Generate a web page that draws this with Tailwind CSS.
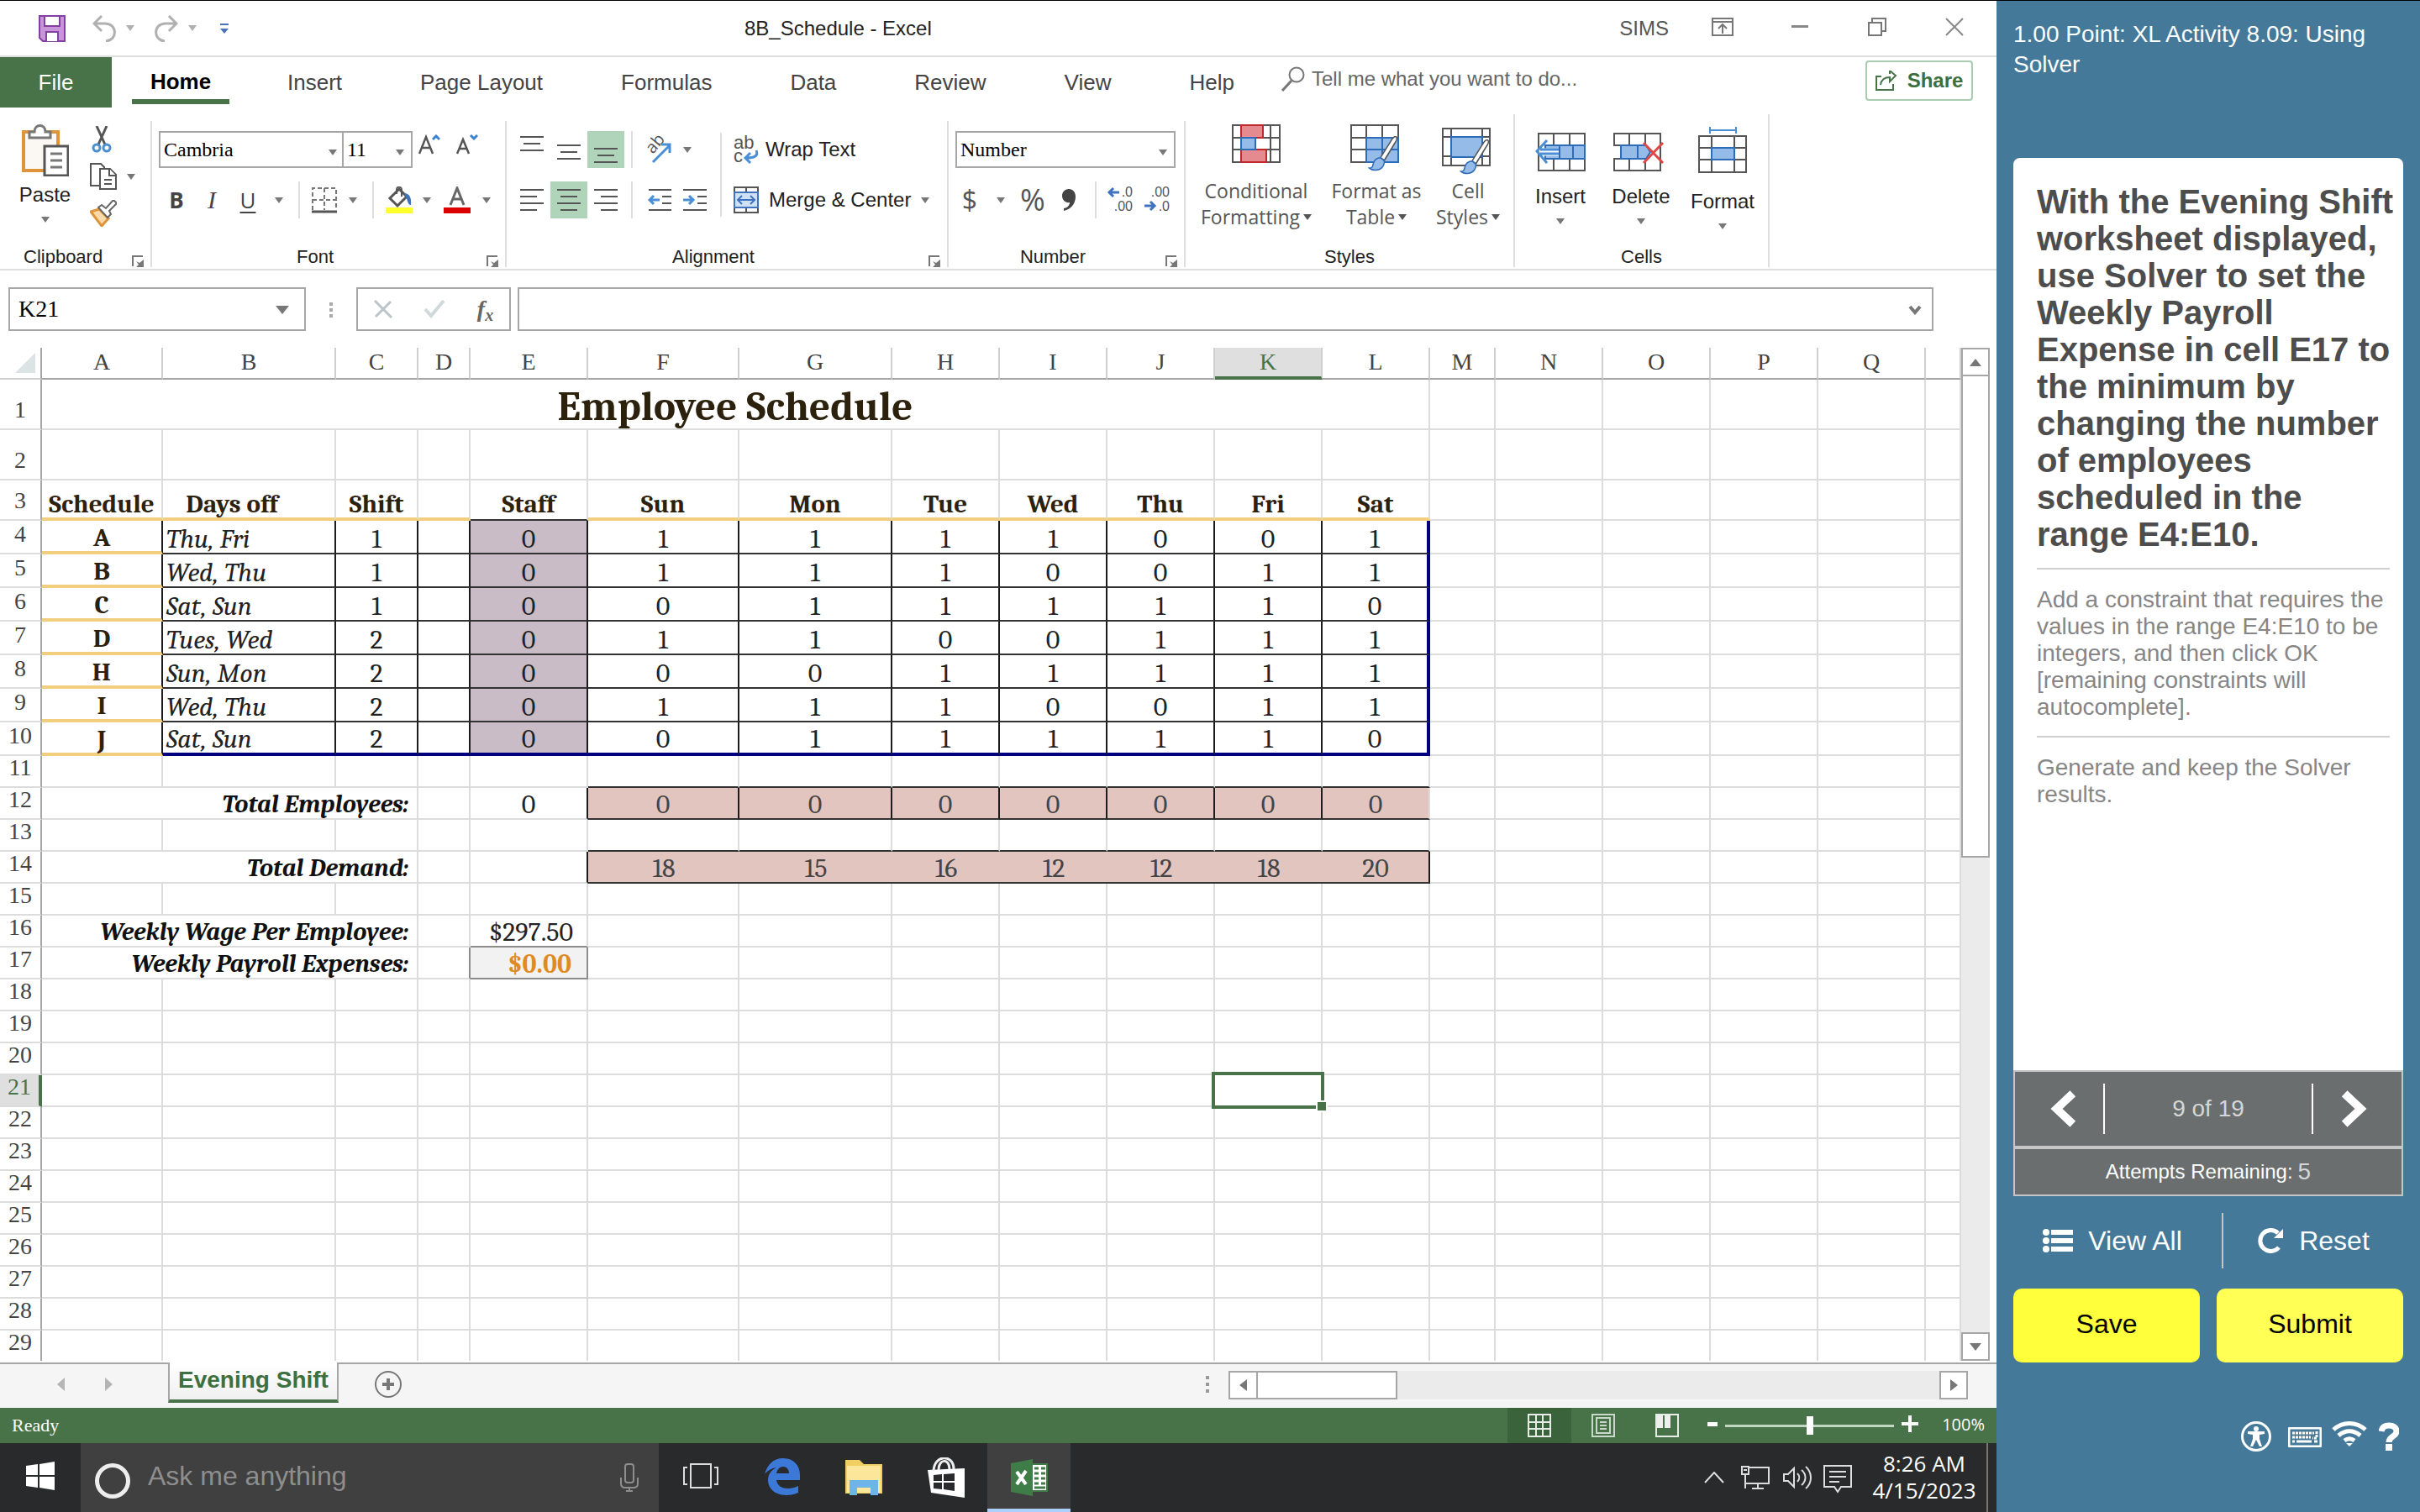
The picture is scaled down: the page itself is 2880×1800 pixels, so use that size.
<!DOCTYPE html>
<html lang="en">
  <head>
    <meta charset="UTF-8" />
    <meta name="viewport" content="width=device-width, initial-scale=1.0" />
    <title>8B_Schedule - Excel</title>
    <script src="https://cdn.jsdelivr.net/npm/@tailwindcss/browser@4"></script>
  </head>
  <body
    class="h-screen flex overflow-hidden bg-white border-t border-black font-['Liberation_Sans',Arial,sans-serif] text-[#222]"
  >
    <svg class="hidden">
      <symbol id="dd" viewBox="0 0 10 7"><path d="M0 0h10L5 7z" fill="currentColor" /></symbol>
      <symbol id="launcher" viewBox="0 0 14 14">
        <path d="M1 13V1h12" fill="none" stroke="#777" stroke-width="2" />
        <path d="M14 5v9H5l3-3-3-4 4 2z" fill="#777" />
      </symbol>
      <symbol id="brush" viewBox="0 0 44 54">
        <path d="M42 1c2 2 1 5-1 8L24 37l-6-4L35 6c2-4 5-6 7-5z" fill="#fff" stroke="#555" stroke-width="2" />
        <path d="M18 33l6 5c0 9-6 14-13 14-4 0-8-1-10-3 5 0 5-3 6-7 1-5 6-9 11-9z" fill="#95bce9" stroke="#2f6cb8" stroke-width="2" />
      </symbol>
    </svg>

    <main class="flex-1 min-w-0 flex flex-col">
      <!-- Title bar -->
      <header class="h-[67px] shrink-0 flex items-center border-b-2 border-[#dedede] text-2xl">
        <div class="w-[886px] flex items-center pl-[46px]">
          <button aria-label="Save workbook">
            <svg class="w-8 h-8" viewBox="0 0 32 32">
              <path d="M1 1h30v30H5l-4-4z" fill="#c795d8" stroke="#8440a0" stroke-width="2" />
              <path d="M7 1h18v12H7zM9 31V20h14v11" fill="#fff" stroke="#8440a0" stroke-width="2" />
            </svg>
          </button>
          <button class="ml-8 flex items-center gap-3 text-[#b0b0b0]" aria-label="Undo">
            <svg class="w-7 h-8" viewBox="0 0 28 32" fill="none" stroke="currentColor" stroke-width="3">
              <path d="M11 1L2 10l9 9M2 10h13c15 0 15 20 1 21" />
            </svg>
            <svg class="w-[10px] h-[7px]"><use href="#dd" /></svg>
          </button>
          <button class="ml-6 flex items-center gap-3 text-[#b0b0b0]" aria-label="Redo">
            <svg class="w-7 h-8" viewBox="0 0 28 32" fill="none" stroke="currentColor" stroke-width="3">
              <path d="M17 1l9 9-9 9M26 10H13C-2 10-2 30 12 31" />
            </svg>
            <svg class="w-[10px] h-[7px]"><use href="#dd" /></svg>
          </button>
          <button class="ml-7" aria-label="Customize toolbar">
            <svg class="w-[10px] h-3" viewBox="0 0 10 12" fill="#4a74b8"><path d="M0 0h10v2H0zM0 6h10l-5 6z" /></svg>
          </button>
        </div>
        <h1>8B_Schedule - Excel</h1>
        <div class="ml-auto flex items-center pr-1 text-[#555]">
          <span class="mr-[18px]">SIMS</span>
          <button class="w-[92px] flex justify-center pb-1" aria-label="Ribbon display options">
            <svg class="w-[26px] h-[22px]" viewBox="0 0 26 22" fill="none" stroke="#777" stroke-width="2">
              <path d="M1 1h24v20H1zM1 5h24M13 19V9M8 13l5-5 5 5" />
            </svg>
          </button>
          <button class="w-[92px] flex justify-center pb-1" aria-label="Minimize">
            <svg class="w-5 h-1" viewBox="0 0 20 4"><path d="M0 0h20v3H0z" fill="#888" /></svg>
          </button>
          <button class="w-[92px] flex justify-center pb-1" aria-label="Restore">
            <svg class="w-[22px] h-[22px]" viewBox="0 0 22 22" fill="none" stroke="#777" stroke-width="2">
              <path d="M1 6h15v15H1zM5 6V1h16v15h-5" />
            </svg>
          </button>
          <button class="w-[92px] flex justify-center pb-1" aria-label="Close">
            <svg class="w-[22px] h-[22px]" viewBox="0 0 22 22" stroke="#888" stroke-width="2"><path d="M1 1l20 20M21 1L1 21" /></svg>
          </button>
        </div>
      </header>

      <!-- Ribbon tabs -->
      <nav class="h-[60px] shrink-0 flex items-center text-[26px] text-[#444]">
        <button class="w-[133px] h-full bg-[#487349] text-white">File</button>
        <div class="flex items-center gap-[93px] h-full pl-6">
          <a href="#" class="h-[56px] w-[116px] -mr-6 self-start flex items-center justify-center border-b-[6px] border-[#487349] font-bold text-black pt-2">Home</a>
          <a href="#">Insert</a>
          <a href="#">Page Layout</a>
          <a href="#">Formulas</a>
          <a href="#">Data</a>
          <a href="#">Review</a>
          <a href="#">View</a>
          <a href="#">Help</a>
        </div>
        <label class="ml-14 flex items-center gap-2 pb-2">
          <svg class="w-7 h-[30px]" viewBox="0 0 28 30" fill="none" stroke="#777">
            <circle cx="18" cy="10" r="8.500" stroke-width="2" /><path d="M12 17L1 29" stroke-width="3" />
          </svg>
          <input type="text" class="w-[340px] text-2xl placeholder:text-[#666]" placeholder="Tell me what you want to do..." />
        </label>
        <button class="ml-auto mr-7 mb-1 w-[128px] h-12 flex items-center justify-center gap-3 border-2 border-[#a9cdb0] rounded text-2xl font-bold text-[#3d6e40]">
          <svg class="w-[26px] h-6" viewBox="0 0 26 24" fill="none" stroke="#487349" stroke-width="2">
            <path d="M7 7H1v16h20v-7M6 17c1-7 5-9 11-9v5l7-7-7-6v4" />
          </svg>
          Share
        </button>
      </nav>

      <!-- Ribbon -->
      <section class="h-[194px] shrink-0 flex items-end pb-[2px] border-b-2 border-[#dedede] text-2xl">
        <div class="w-[181px] h-[174px] flex flex-col border-r-2 border-[#dedede]">
          <div class="flex-1 flex">
            <button class="w-[107px] flex flex-col items-center pt-1">
              <svg class="w-14 h-[62px]" viewBox="0 0 56 62" fill="#fff" stroke-width="2">
                <path d="M2 9h41v46H2z" fill="#fbf7f2" stroke="#e0943a" stroke-width="4" />
                <path d="M9 16V9h6c0-10 13-10 13 0h6v7z" stroke="#777" stroke-width="3" />
                <path d="M27 26h28v35H27z" stroke="#555" stroke-width="3" />
                <path d="M34 35h14M34 43h14M34 51h14" stroke="#777" stroke-width="3" />
              </svg>
              <span class="mt-2 leading-7">Paste</span>
              <svg class="mt-3 w-[10px] h-[7px] text-[#777]"><use href="#dd" /></svg>
            </button>
            <div class="flex flex-col gap-3 pt-[6px]">
              <button aria-label="Cut">
                <svg class="w-8 h-8" viewBox="0 0 32 32" fill="none" stroke="#555" stroke-width="3">
                  <path d="M8 0l10 22M20 0L10 22" />
                  <circle cx="8" cy="26" r="4" stroke="#4a90d0" /><circle cx="20" cy="26" r="4" stroke="#4a90d0" />
                </svg>
              </button>
              <button class="flex items-center gap-3" aria-label="Copy">
                <svg class="w-8 h-8" viewBox="0 0 32 32" fill="#fff" stroke="#555" stroke-width="2">
                  <path d="M1 1h12l4 4v22H1z" /><path d="M12 7h12l7 7v17H12z" /><path d="M23 7v8h8M17 20h9M17 25h9" />
                </svg>
                <svg class="w-[10px] h-[7px] text-[#777]"><use href="#dd" /></svg>
              </button>
              <button aria-label="Format painter">
                <svg class="w-8 h-8" viewBox="0 0 32 32" stroke-width="2">
                  <path d="M1 14l10-3 11 11-8 9z" fill="#f8d9a8" stroke="#e0943a" stroke-width="3" />
                  <path d="M10 9l4-3 5 4 9-10 4 4-9 9 2 4-4 4z" fill="#fff" stroke="#666" />
                </svg>
              </button>
            </div>
          </div>
          <div class="h-6 flex items-center pl-7 text-[22px]">
            Clipboard
            <button class="ml-auto mr-2 self-end" aria-label="Clipboard settings"><svg class="w-[14px] h-[14px]"><use href="#launcher" /></svg></button>
          </div>
        </div>

        <div class="w-[422px] h-[174px] flex flex-col border-r-2 border-[#dedede]">
          <div class="flex-1 flex flex-col gap-4 pl-2 pt-3">
            <div class="h-11 flex items-center font-['Liberation_Serif',serif] text-black">
              <div class="relative">
                <select aria-label="Font name" class="appearance-none w-[220px] h-11 pl-1 border-2 border-[#a6a6a6]"><option>Cambria</option></select>
                <svg class="absolute right-2 top-[22px] w-[10px] h-[7px] text-[#777]"><use href="#dd" /></svg>
              </div>
              <div class="relative">
                <select aria-label="Font size" class="appearance-none w-[82px] h-11 pl-1 border-y-2 border-r-2 border-[#a6a6a6]"><option>11</option></select>
                <svg class="absolute right-[10px] top-[22px] w-[10px] h-[7px] text-[#777]"><use href="#dd" /></svg>
              </div>
              <button class="w-10 pb-3 flex justify-center" aria-label="Increase font size">
                <svg class="w-[26px] h-6" viewBox="0 0 26 24" fill="none" stroke-width="2.500">
                  <path d="M1 23L9 3l8 20M4 16h10" stroke="#555" /><path d="M17 6l4-4 4 4" stroke="#3b82d0" stroke-width="3" />
                </svg>
              </button>
              <button class="w-[50px] pb-3 flex justify-center" aria-label="Decrease font size">
                <svg class="w-[26px] h-6" viewBox="0 0 26 24" fill="none" stroke-width="2.500">
                  <path d="M1 23L8 6l7 17M4 17h8" stroke="#555" /><path d="M17 1l4 4 4-4" stroke="#3b82d0" stroke-width="3" />
                </svg>
              </button>
            </div>
            <div class="h-11 flex items-center text-[26px] text-[#444]">
              <button class="w-[42px] font-bold font-['Open_Sans',sans-serif]">B</button>
              <button class="w-[42px] italic font-['Liberation_Serif',serif] text-[30px]">I</button>
              <button class="w-11 underline underline-offset-4 font-['Open_Sans',sans-serif]">U</button>
              <button class="w-[30px] flex justify-center text-[#777]" aria-label="Underline options"><svg class="w-[10px] h-[7px]"><use href="#dd" /></svg></button>
              <div class="mx-2 w-[2px] h-11 bg-[#dedede]"></div>
              <button class="w-[42px] flex justify-center" aria-label="Borders">
                <svg class="w-[30px] h-[31px]" viewBox="0 0 30 31" fill="none" stroke="#777" stroke-width="2">
                  <path d="M1 27V1h28v26M15 1v26M1 15h28" stroke-dasharray="5 3" /><path d="M0 29h30" stroke="#555" stroke-width="3" />
                </svg>
              </button>
              <button class="w-[26px] flex justify-center text-[#777]" aria-label="Border options"><svg class="w-[10px] h-[7px]"><use href="#dd" /></svg></button>
              <div class="mx-[10px] w-[2px] h-11 bg-[#dedede]"></div>
              <button class="w-10 flex justify-center" aria-label="Fill color">
                <svg class="w-8 h-8" viewBox="0 0 32 32">
                  <path d="M16 3L5 14l9 9 11-11z" fill="#fff" stroke="#555" stroke-width="3" />
                  <path d="M13 9V4c0-5 6-4 6 0v8" fill="none" stroke="#555" stroke-width="2" />
                  <path d="M22 8c6 0 9 5 8 14-4 0-4-7-6-9z" fill="#3b74b8" /><path d="M0 25h32v7H0z" fill="#ffff2e" />
                </svg>
              </button>
              <button class="w-[26px] flex justify-center text-[#777]" aria-label="Fill options"><svg class="w-[10px] h-[7px]"><use href="#dd" /></svg></button>
              <button class="w-[46px] flex justify-center" aria-label="Font color">
                <svg class="w-8 h-8" viewBox="0 0 32 32" fill="none">
                  <path d="M8 22l8-20 8 20M11 15h10" stroke="#666" stroke-width="3" /><path d="M0 25h32v7H0z" fill="#dd0000" />
                </svg>
              </button>
              <button class="w-6 flex justify-center text-[#777]" aria-label="Font color options"><svg class="w-[10px] h-[7px]"><use href="#dd" /></svg></button>
            </div>
          </div>
          <div class="h-6 relative flex items-center justify-center pr-8 text-[22px]">
            Font
            <button class="absolute right-2 bottom-0" aria-label="Font settings"><svg class="w-[14px] h-[14px]"><use href="#launcher" /></svg></button>
          </div>
        </div>

        <div class="w-[526px] h-[174px] flex flex-col border-r-2 border-[#dedede]">
          <div class="flex-1 flex pl-2 pt-3">
            <div class="w-[246px] flex flex-col gap-4">
              <div class="h-11 flex items-center">
                <button class="w-11 h-11 flex justify-center pt-[6px]" aria-label="Top align">
                  <svg class="w-7 h-5" viewBox="0 0 28 20" stroke="#555" stroke-width="2"><path d="M0 1h28M4 9h20M0 17h28" /></svg>
                </button>
                <button class="w-11 h-11 flex justify-center pt-4" aria-label="Middle align">
                  <svg class="w-7 h-5" viewBox="0 0 28 20" stroke="#555" stroke-width="2"><path d="M0 1h28M4 9h20M0 17h28" /></svg>
                </button>
                <button class="w-11 h-11 flex justify-center pt-5 bg-[#b0d4ba]" aria-label="Bottom align">
                  <svg class="w-7 h-5" viewBox="0 0 28 20" stroke="#555" stroke-width="2"><path d="M0 1h28M4 9h20M0 17h28" /></svg>
                </button>
                <div class="mx-2 w-[2px] h-11 bg-[#dedede]"></div>
                <button class="w-11 flex justify-center" aria-label="Orientation">
                  <svg class="w-8 h-8 overflow-visible" viewBox="0 0 32 32" fill="none">
                    <text transform="translate(10 22) rotate(-50)" font-family="Open Sans" font-size="20" fill="#555">ab</text>
                    <path d="M10 31l20-20M20 10h10v10" stroke="#4a8fd6" stroke-width="3" />
                  </svg>
                </button>
                <button class="w-[26px] flex justify-center text-[#777]" aria-label="Orientation options"><svg class="w-[10px] h-[7px]"><use href="#dd" /></svg></button>
              </div>
              <div class="h-11 flex items-center">
                <button class="w-11 h-11 flex items-center justify-center" aria-label="Align left">
                  <svg class="w-7 h-[26px]" viewBox="0 0 28 26" stroke="#555" stroke-width="2"><path d="M0 1h28M0 9h20M0 17h28M0 25h20" /></svg>
                </button>
                <button class="w-11 h-11 flex items-center justify-center bg-[#b0d4ba]" aria-label="Center">
                  <svg class="w-7 h-[26px]" viewBox="0 0 28 26" stroke="#555" stroke-width="2"><path d="M0 1h28M4 9h20M0 17h28M4 25h20" /></svg>
                </button>
                <button class="w-11 h-11 flex items-center justify-center" aria-label="Align right">
                  <svg class="w-7 h-[26px]" viewBox="0 0 28 26" stroke="#555" stroke-width="2"><path d="M0 1h28M8 9h20M0 17h28M8 25h20" /></svg>
                </button>
                <div class="mx-2 w-[2px] h-11 bg-[#dedede]"></div>
                <button class="w-12 flex justify-center" aria-label="Decrease indent">
                  <svg class="w-7 h-[26px]" viewBox="0 0 28 26" fill="none" stroke="#555" stroke-width="2">
                    <path d="M1 1h27M17 9h11M17 17h11M1 25h27" /><path d="M14 13H2M7 8l-5 5 5 5" stroke="#4a8fd6" stroke-width="3" />
                  </svg>
                </button>
                <button class="w-9 flex justify-center" aria-label="Increase indent">
                  <svg class="w-7 h-[26px]" viewBox="0 0 28 26" fill="none" stroke="#555" stroke-width="2">
                    <path d="M0 1h28M17 9h11M17 17h11M0 25h28" /><path d="M0 13h12M7 8l5 5-5 5" stroke="#4a8fd6" stroke-width="3" />
                  </svg>
                </button>
              </div>
            </div>
            <div class="mt-[2px] w-[2px] h-[100px] bg-[#dedede]"></div>
            <div class="pl-[14px] flex flex-col gap-4">
              <button class="h-11 flex items-center gap-2">
                <svg class="w-[30px] h-8 overflow-visible" viewBox="0 0 30 32" fill="none">
                  <text x="0" y="15" font-family="Liberation Sans" font-size="22" fill="#555">ab</text>
                  <text x="0" y="31" font-family="Liberation Sans" font-size="22" fill="#555">c</text>
                  <path d="M27 17c3 7-3 9-12 9M20 20l-6 6 6 6" stroke="#4a8fd6" stroke-width="3" />
                </svg>
                Wrap Text
              </button>
              <button class="h-11 flex items-center gap-3">
                <svg class="w-[30px] h-8" viewBox="0 0 30 32" fill="#fff" stroke="#555" stroke-width="2">
                  <path d="M1 1h28v30H1zM15 1v6M15 25v6" /><path d="M1 7h28v18H1z" fill="#cfe1f7" stroke="#3f72bf" />
                  <path d="M5 16h20M10 11l-5 5 5 5M20 11l5 5-5 5" fill="none" stroke="#3f72bf" />
                </svg>
                Merge &amp; Center
                <svg class="w-[10px] h-[7px] text-[#777]"><use href="#dd" /></svg>
              </button>
            </div>
          </div>
          <div class="h-6 relative flex items-center justify-center pr-8 text-[22px]">
            Alignment
            <button class="absolute right-2 bottom-0" aria-label="Alignment settings"><svg class="w-[14px] h-[14px]"><use href="#launcher" /></svg></button>
          </div>
        </div>

        <div class="w-[282px] h-[174px] flex flex-col border-r-2 border-[#dedede]">
          <div class="flex-1 flex flex-col gap-4 pl-2 pt-3">
            <div class="relative h-11 w-[262px]">
              <select aria-label="Number format" class="appearance-none w-full h-11 pl-1 border-2 border-[#a6a6a6] font-['Liberation_Serif',serif] text-black"><option>Number</option></select>
              <svg class="absolute right-[10px] top-[22px] w-[10px] h-[7px] text-[#777]"><use href="#dd" /></svg>
            </div>
            <div class="h-11 flex items-center font-['Open_Sans',sans-serif] text-[#555]">
              <button class="w-[34px] text-[32px] leading-11">$</button>
              <button class="w-10 flex justify-center text-[#777]" aria-label="Currency options"><svg class="w-[10px] h-[7px]"><use href="#dd" /></svg></button>
              <button class="w-9 flex justify-center text-4xl leading-11">%</button>
              <button class="w-[50px] flex justify-center" aria-label="Comma style">
                <svg class="w-4 h-[26px]" viewBox="0 0 16 26"><path d="M8 0c5 0 8 4 8 9 0 8-5 15-14 17v-3c5-1 7-4 7-7-5 1-9-3-9-8 0-4 3-8 8-8z" fill="#444" /></svg>
              </button>
              <div class="mx-[6px] w-[2px] h-11 bg-[#dedede]"></div>
              <button class="w-11 flex justify-center" aria-label="Increase decimal">
                <svg class="w-[30px] h-8 overflow-visible" viewBox="0 0 30 32" font-family="Liberation Sans" font-size="16" fill="#555">
                  <text x="30" y="12" text-anchor="end">.0</text><text x="30" y="29" text-anchor="end">.00</text>
                  <path d="M14 7H2M7 2L2 7l5 5" fill="none" stroke="#3f72bf" stroke-width="3" />
                </svg>
              </button>
              <button class="w-11 flex justify-center" aria-label="Decrease decimal">
                <svg class="w-[30px] h-8 overflow-visible" viewBox="0 0 30 32" font-family="Liberation Sans" font-size="16" fill="#555">
                  <text x="30" y="12" text-anchor="end">.00</text><text x="30" y="29" text-anchor="end">.0</text>
                  <path d="M0 23h12M7 18l5 5-5 5" fill="none" stroke="#3f72bf" stroke-width="3" />
                </svg>
              </button>
            </div>
          </div>
          <div class="h-6 relative flex items-center justify-center pr-8 text-[22px]">
            Number
            <button class="absolute right-2 bottom-0" aria-label="Number settings"><svg class="w-[14px] h-[14px]"><use href="#launcher" /></svg></button>
          </div>
        </div>

        <div class="w-[392px] h-[182px] pt-2 flex flex-col border-r-2 border-[#dedede]">
          <div class="flex-1 flex pl-[14px] font-['Open_Sans',sans-serif] text-[23px] leading-[31px] text-[#555]">
            <button class="w-[140px] flex flex-col items-center pt-1">
              <svg class="w-[58px] h-[46px]" viewBox="0 0 58 46" fill="#fff" stroke="#555" stroke-width="2">
                <path d="M1 1h56v44H1zM1 16h56M1 30h56M11 1v44M46 1v44" />
                <path d="M11 1h26v15H11zM11 30h30v15H11z" fill="#e58a8e" stroke="#c0282c" />
                <path d="M11 16h17v14H11z" fill="#95bce9" stroke="#2f6cb8" />
              </svg>
              <span class="mt-[18px]">Conditional</span>
              <span class="flex items-center gap-1">Formatting <svg class="w-[10px] h-[7px]"><use href="#dd" /></svg></span>
            </button>
            <button class="w-[146px] flex flex-col items-center pt-1">
              <svg class="w-[62px] h-14" viewBox="0 0 62 56" fill="#fff" stroke="#555" stroke-width="2">
                <path d="M1 1h56v44H1zM1 16h56M1 30h56M19 1v44M38 1v44" />
                <path d="M19 16h38v29H19z" fill="#95bce9" stroke="#2f6cb8" /><path d="M19 30h38M38 16v29" stroke="#2f6cb8" />
                <use href="#brush" x="16" y="14" width="46" height="42" />
              </svg>
              <span class="mt-2">Format as</span>
              <span class="flex items-center gap-1">Table <svg class="w-[10px] h-[7px]"><use href="#dd" /></svg></span>
            </button>
            <button class="w-[72px] flex flex-col items-center pt-2">
              <svg class="w-[62px] h-14" viewBox="0 0 62 56" fill="#fff" stroke="#555" stroke-width="2">
                <path d="M1 1h56v44H1zM1 11h56M1 34h56M11 1v44M48 1v44" />
                <path d="M11 11h37v24H11z" fill="#95bce9" stroke="#2f6cb8" />
                <use href="#brush" x="16" y="14" width="46" height="42" />
              </svg>
              <span class="mt-1">Cell</span>
              <span class="flex items-center gap-1">Styles <svg class="w-[10px] h-[7px]"><use href="#dd" /></svg></span>
            </button>
          </div>
          <div class="h-6 flex items-center justify-center text-[22px]">Styles</div>
        </div>

        <div class="w-[303px] h-[182px] pt-2 flex flex-col border-r-2 border-[#dedede]">
          <div class="flex-1 flex pl-[6px] leading-7">
            <button class="w-24 flex flex-col items-center pt-[14px]">
              <svg class="w-[60px] h-[46px]" viewBox="0 0 60 46" fill="#fff" stroke="#555" stroke-width="2">
                <path d="M4 1h55v44H4zM22 1v44M41 1v44" /><path d="M12 15h47v16H12z" fill="#95bce9" stroke="#2f6cb8" /><path d="M29 15v16M45 15v16" stroke="#2f6cb8" />
                <path d="M28 20H6v6h22" stroke="#fff" stroke-width="3" /><path d="M28 20H6M28 25H6M14 9L2 22l12 14" fill="none" stroke="#4a8fd6" stroke-width="3" />
              </svg>
              <span class="mt-4">Insert</span>
              <svg class="mt-3 w-[10px] h-[7px] text-[#777]"><use href="#dd" /></svg>
            </button>
            <button class="w-24 flex flex-col items-center pt-[14px]">
              <svg class="w-[66px] h-[46px]" viewBox="0 0 66 46" fill="#fff" stroke="#555" stroke-width="2">
                <path d="M1 1h55v44H1V31h8V15H1zM19 1v14M38 1v14M19 31v14M38 31v14" />
                <path d="M9 15h30l5 8-5 8H9zM29 15v16" fill="#95bce9" stroke="#2f6cb8" />
                <path d="M36 12l23 24M59 12L36 36" stroke="#e04848" stroke-width="3" />
              </svg>
              <span class="mt-4">Delete</span>
              <svg class="mt-3 w-[10px] h-[7px] text-[#777]"><use href="#dd" /></svg>
            </button>
            <button class="w-[98px] flex flex-col items-center pt-[6px]">
              <svg class="w-[58px] h-14" viewBox="0 0 58 56" fill="#fff" stroke="#555" stroke-width="2">
                <path d="M14 5h31M14 1v8M45 1v8" stroke="#4a8fd6" /><path d="M1 12h56v43H1zM1 26h56M1 40h56M16 12v43M43 12v43" />
                <path d="M16 26h27v14H16z" fill="#95bce9" stroke="#2f6cb8" />
              </svg>
              <span class="mt-5">Format</span>
              <svg class="mt-3 w-[10px] h-[7px] text-[#777]"><use href="#dd" /></svg>
            </button>
          </div>
          <div class="h-6 flex items-center justify-center text-[22px]">Cells</div>
        </div>
      </section>

      <!-- Formula bar -->
      <section class="h-[92px] shrink-0 flex pt-5 pl-[10px]">
        <div class="relative">
          <input type="text" aria-label="Name box" value="K21" class="w-[354px] h-[52px] pl-[10px] border-2 border-[#a6a6a6] font-['Liberation_Serif',serif] text-[28px] text-black" />
          <svg class="absolute right-5 top-[22px] w-4 h-[10px] text-[#777]" viewBox="0 0 16 10"><path d="M0 0h16L8 10z" fill="currentColor" /></svg>
        </div>
        <svg class="w-[60px] h-[52px]" viewBox="0 0 60 52" fill="#aaa"><path d="M28 18h4v4h-4zM28 25h4v4h-4zM28 32h4v4h-4z" /></svg>
        <div class="w-[184px] h-[52px] flex items-center justify-around border-2 border-[#a6a6a6]">
          <button aria-label="Cancel"><svg class="w-[22px] h-[22px]" viewBox="0 0 22 22" stroke="#bbc4c6" stroke-width="3"><path d="M1 1l20 20M20 2L2 20" /></svg></button>
          <button aria-label="Enter"><svg class="w-[26px] h-[22px]" viewBox="0 0 26 22" fill="none" stroke="#d0d9da" stroke-width="4"><path d="M2 11l7 8L24 1" /></svg></button>
          <button class="italic font-bold font-['Liberation_Serif',serif] text-[28px] text-[#666]" aria-label="Insert function">f<sub class="text-xl">x</sub></button>
        </div>
        <div class="relative flex-1 ml-2 mr-[75px]">
          <input type="text" aria-label="Formula bar" class="w-full h-[52px] px-3 border-2 border-[#a6a6a6] font-['Liberation_Serif',serif] text-[28px]" />
          <svg class="absolute right-[14px] top-[21px] w-4 h-3" viewBox="0 0 16 12" fill="none" stroke="#777" stroke-width="4"><path d="M2 2l6 7 6-7" /></svg>
        </div>
      </section>

      <!-- Worksheet -->
      <section class="flex-1 min-h-0 flex pb-[2px] pr-2">
        <div class="flex-1 min-w-0 overflow-hidden">
          <table class="w-full table-fixed border-separate border-spacing-0 text-[32px] leading-8 font-[Cambria,Caladea,'Liberation_Serif',serif]">
            <colgroup>
              <col class="w-[50px]" /><col class="w-[144px]" /><col class="w-[206px]" /><col class="w-[98px]" /><col class="w-[62px]" />
              <col class="w-[140px]" /><col class="w-[180px]" /><col class="w-[182px]" /><col class="w-32" /><col class="w-32" />
              <col class="w-32" /><col class="w-32" /><col class="w-32" /><col class="w-[78px]" /><col class="w-32" />
              <col class="w-32" /><col class="w-32" /><col class="w-32" /><col />
            </colgroup>
            <thead><tr id="letters" class="h-[38px]"></tr></thead>
            <tbody id="rows"></tbody>
          </table>
        </div>
        <div class="w-[34px] flex flex-col bg-[#ebebeb] text-[#777]">
          <button class="h-[34px] flex items-center justify-center bg-white border-2 border-[#a6a6a6]" aria-label="Scroll up"><svg class="w-[14px] h-[9px]" viewBox="0 0 14 9"><path d="M0 9h14L7 0z" fill="currentColor" /></svg></button>
          <div class="h-[573px] bg-white border-2 border-t-0 border-[#a6a6a6]"></div>
          <button class="mt-auto h-[34px] flex items-center justify-center bg-white border-2 border-[#a6a6a6]" aria-label="Scroll down"><svg class="w-[14px] h-[9px]" viewBox="0 0 14 9"><path d="M0 0h14L7 9z" fill="currentColor" /></svg></button>
        </div>
      </section>

      <!-- Sheet tabs -->
      <section class="h-[54px] shrink-0 flex bg-[#f5f5f5] border-t-2 border-[#a6a6a6]">
        <div class="w-[200px] flex items-center gap-[48px] pl-[68px] pb-1 text-[#b5b5b5]">
          <button aria-label="Previous sheet"><svg class="w-[9px] h-4" viewBox="0 0 9 16"><path d="M9 0v16L0 8z" fill="currentColor" /></svg></button>
          <button aria-label="Next sheet"><svg class="w-[9px] h-4" viewBox="0 0 9 16"><path d="M0 0v16l9-8z" fill="currentColor" /></svg></button>
        </div>
        <button class="w-[203px] h-[48px] -mt-[2px] pb-[2px] bg-linear-to-b from-white to-[#f0f0f0] border-x-2 border-x-[#a6a6a6] border-b-4 border-b-[#487349] font-bold text-[28px] leading-9 text-[#3d7040]">Evening Shift</button>
        <button class="ml-[42px] mt-[7px] self-start" aria-label="New sheet">
          <svg class="w-[34px] h-[34px]" viewBox="0 0 34 34" fill="none" stroke="#777"><circle cx="17" cy="17" r="15" stroke-width="2" /><path d="M17 10v14M10 17h14" stroke-width="4" /></svg>
        </button>
        <svg class="ml-auto mr-[22px] mt-3 w-[6px] h-6" viewBox="0 0 6 24" fill="#999"><path d="M1 2h4v4H1zM1 10h4v4H1zM1 18h4v4H1z" /></svg>
        <div class="mt-2 w-[880px] h-[34px] flex bg-[#ebebeb] mr-[34px] text-[#777]">
          <button class="w-[35px] flex items-center justify-center bg-white border-2 border-[#a6a6a6]" aria-label="Scroll left"><svg class="w-[9px] h-[14px]" viewBox="0 0 9 14"><path d="M9 0v14L0 7z" fill="currentColor" /></svg></button>
          <div class="w-[166px] bg-white border-2 border-l-0 border-[#a6a6a6]"></div>
          <button class="ml-auto w-[34px] flex items-center justify-center bg-white border-2 border-[#a6a6a6]" aria-label="Scroll right"><svg class="w-[9px] h-[14px]" viewBox="0 0 9 14"><path d="M0 0v14l9-7z" fill="currentColor" /></svg></button>
        </div>
      </section>

      <!-- Status bar -->
      <section class="h-[42px] shrink-0 flex items-center bg-[#487349] text-white">
        <span class="pl-[14px] pb-[2px] text-[22px] font-['Liberation_Serif',serif]">Ready</span>
        <button class="ml-auto w-[76px] h-full flex items-center justify-center bg-[#3a633b]" aria-label="Normal view">
          <svg class="w-7 h-7" viewBox="0 0 28 28" fill="none" stroke="#e6ede6" stroke-width="2"><path d="M1 1h26v26H1zM1 10h26M1 18h26M10 1v26M18 1v26" /></svg>
        </button>
        <button class="w-[76px] flex justify-center" aria-label="Page layout view">
          <svg class="w-7 h-7" viewBox="0 0 28 28" fill="none" stroke="#c9d8ca" stroke-width="2"><path d="M1 1h26v26H1zM6 5h16v18H6zM10 10h8M10 14h8M10 18h8" /></svg>
        </button>
        <button class="w-[76px] flex justify-center" aria-label="Page break view">
          <svg class="w-7 h-7" viewBox="0 0 28 28"><path d="M1 1h26v26H1z" fill="none" stroke="#e6ede6" stroke-width="2" /><path d="M2 2h7v15H2zM11 2h7v15h-7z" fill="#eee" /></svg>
        </button>
        <button class="w-[31px] flex justify-center pb-1" aria-label="Zoom out"><svg class="w-3 h-[5px]"><rect width="12" height="5" fill="#fff" /></svg></button>
        <input type="range" aria-label="Zoom" min="0" max="200" value="100" class="appearance-none w-[201px] h-[3px] bg-[#c2d7c2] [&::-webkit-slider-thumb]:appearance-none [&::-webkit-slider-thumb]:w-2 [&::-webkit-slider-thumb]:h-[22px] [&::-webkit-slider-thumb]:bg-white" />
        <button class="w-[38px] flex justify-center pb-1" aria-label="Zoom in"><svg class="w-5 h-5" viewBox="0 0 20 20" stroke="#fff" stroke-width="4"><path d="M10 0v20M0 10h20" /></svg></button>
        <span class="w-[84px] pr-[14px] pb-[2px] text-right text-[20px] font-['Open_Sans',sans-serif] font-medium">100%</span>
      </section>

      <!-- Taskbar -->
      <footer class="h-[82px] shrink-0 flex items-center bg-[#292a2c] text-white">
        <button class="w-24 flex justify-center pb-1" aria-label="Start">
          <svg class="w-[34px] h-[34px]" viewBox="0 0 34 34" fill="#fff"><path d="M0 5l14-2v13H0zM16 3l18-3v16H16zM0 18h14v13L0 29zM16 18h18v16l-18-3z" /></svg>
        </button>
        <div class="w-[688px] h-full flex items-center bg-[#404040] pl-4">
          <svg class="w-11 h-11 mt-2" viewBox="0 0 44 44"><circle cx="22" cy="22" r="18.500" fill="none" stroke="#eee" stroke-width="5" /></svg>
          <input type="text" aria-label="Search" placeholder="Ask me anything" class="ml-5 mb-1 flex-1 text-[32px] placeholder:text-[#8e8e8e]" />
          <button class="mr-6" aria-label="Voice search">
            <svg class="w-[22px] h-[34px]" viewBox="0 0 22 34" fill="none" stroke="#8e8e8e" stroke-width="2"><rect x="6" y="1" width="10" height="22" rx="3" /><path d="M1 17v7c0 3 2 5 5 5h10c3 0 5-2 5-5v-7M11 29v4M7 33h8" /></svg>
          </button>
        </div>
        <button class="w-[99px] flex justify-center pb-1" aria-label="Task view">
          <svg class="w-[42px] h-[30px]" viewBox="0 0 42 30" fill="none" stroke="#ddd" stroke-width="2"><path d="M9 1h24v28H9zM5 5H1v20h4M37 5h4v20h-4" /></svg>
        </button>
        <button class="w-[96px] flex justify-center pb-[2px]" aria-label="Edge">
          <svg class="w-[42px] h-11" viewBox="0 0 42 44" fill="#3b78d8">
            <path d="M0 19C3 8 10 0 22 0c13 0 20 9 20 20v6H14c1 7 7 10 14 10 4 0 8-1 12-3v8c-4 2-9 3-14 3C12 44 4 36 4 26c0-7 4-12 10-15C8 12 3 15 0 19zm14-1h15c0-5-3-8-7-8s-7 3-8 8z" />
          </svg>
        </button>
        <button class="w-[97px] flex justify-center" aria-label="File Explorer">
          <svg class="w-[44px] h-[42px]" viewBox="0 0 44 42"><path d="M0 0h17l5 5h22v35H0z" fill="#f2cf62" /><path d="M2 7h40v32H2z" fill="#fbe69a" /><path d="M5 24h34v18h-9v-9H14v9H5z" fill="#6db5e8" /></svg>
        </button>
        <button class="w-[99px] flex justify-center" aria-label="Store">
          <svg class="w-11 h-12" viewBox="0 0 44 48"><path d="M0 15l44-2v35L4 42z" fill="#fff" /><path d="M7 16C8-4 31-4 31 14M13 15C13 1 26 1 26 14" fill="none" stroke="#eee" stroke-width="3" /><path d="M7 21l10-1v8H7zM19 20l13-1v9H19zM7 30h10v8l-10-1zM19 30h13v10l-13-2z" fill="#292a2c" /></svg>
        </button>
        <button class="w-[99px] h-full flex items-center justify-center bg-[#404040] border-b-4 border-[#accffc] pt-1" aria-label="Excel">
          <svg class="w-11 h-11" viewBox="0 0 44 44"><path d="M24 6h19v32H24z" fill="#fff" stroke="#3f7d48" stroke-width="2" /><path d="M28 11h5M28 17h5M28 23h5M28 29h5M36 11h5M36 17h5M36 23h5M36 29h5M28 34h13" stroke="#3f7d48" stroke-width="3" /><path d="M0 5l26-5v44L0 39z" fill="#3f7d48" /><path d="M7 15l11 15M18 14L7 30" stroke="#fff" stroke-width="4" /></svg>
        </button>
        <div class="ml-auto flex items-center h-full">
          <button aria-label="Show hidden icons"><svg class="w-6 h-[14px]" viewBox="0 0 24 14" fill="none" stroke="#ddd" stroke-width="2"><path d="M1 13L12 1l11 12" /></svg></button>
          <svg class="ml-5 w-[34px] h-[28px]" viewBox="0 0 34 28" fill="none" stroke="#ddd" stroke-width="2"><path d="M10 2h23v19H6M1 1h8v9H1zM5 10v17M20 21v6M13 27h14M3 5h4" /></svg>
          <svg class="ml-4 w-[34px] h-7" viewBox="0 0 34 28" fill="none" stroke="#ddd" stroke-width="2"><path d="M1 10h5l7-7v22l-7-7H1zM17 9c3 3 3 7 0 10M22 5c6 5 6 13 0 18M27 1c8 7 8 19 0 26" /></svg>
          <svg class="ml-[14px] mt-1 w-[34px] h-[34px]" viewBox="0 0 34 34" fill="none" stroke="#ddd" stroke-width="2"><path d="M1 1h32v25H21l-4 6-4-6H1zM7 8h20M7 14h20M7 20h12" /></svg>
          <div class="w-[160px] pl-3 pb-[2px] text-center text-[26px] leading-8 font-['Open_Sans',sans-serif]"><p>8:26 AM</p><p>4/15/2023</p></div>
          <div class="mr-[10px] w-[2px] h-full bg-[#7b756e]"></div>
        </div>
      </footer>
    </main>

    <!-- Task panel -->
    <aside class="w-[504px] shrink-0 flex flex-col px-5 bg-[#44799a] text-white">
      <h2 class="h-[187px] pt-[22px] text-[28px] leading-9">1.00 Point: XL Activity 8.09: Using Solver</h2>
      <article class="flex-1 min-h-0 bg-white rounded-t-lg pl-7 pr-2 pt-[30px] text-[28px] leading-8 text-[#868686]">
        <h3 class="pb-[18px] text-[40px] leading-11 font-bold text-[#4d4d4d]">With the Evening Shift worksheet displayed, use Solver to set the Weekly Payroll Expense in cell E17 to the minimum by changing the number of employees scheduled in the range E4:E10.</h3>
        <p class="mr-2 pt-5 pb-[18px] border-t-2 border-[#cfcfcf]">Add a constraint that requires the values in the range E4:E10 to be integers, and then click OK [remaining constraints will autocomplete].</p>
        <p class="mr-2 pt-5 border-t-2 border-[#cfcfcf]">Generate and keep the Solver results.</p>
      </article>
      <div class="shrink-0 border-2 border-[#c6c6c6] bg-[#6a6e6e]">
        <div class="h-[92px] flex items-center border-b-4 border-[#c6c6c6] text-[28px] text-[#d6d6d6]">
          <button class="w-[105px] flex justify-center pl-2" aria-label="Previous task"><svg class="w-[30px] h-[46px]" viewBox="0 0 28 42" fill="none" stroke="#fff" stroke-width="9"><path d="M25 4L7 21l18 17" /></svg></button>
          <div class="flex-1 h-[60px] flex items-center justify-center border-x-2 border-white">9 of 19</div>
          <button class="w-[105px] flex justify-center pr-2" aria-label="Next task"><svg class="w-[30px] h-[46px]" viewBox="0 0 28 42" fill="none" stroke="#fff" stroke-width="9"><path d="M3 4l18 17L3 38" /></svg></button>
        </div>
        <p class="h-[54px] flex items-center justify-center gap-[6px] text-2xl">Attempts Remaining: <span class="text-[28px] text-[#d6d6d6]">5</span></p>
      </div>
      <div class="shrink-0 mt-5 flex h-[66px] text-[32px]">
        <button class="flex-1 flex items-center justify-center gap-[18px] border-r-2 border-[#c6c6c6] pr-6 pl-3">
          <svg class="w-9 h-[28px]" viewBox="0 0 36 28" fill="#fff"><circle cx="4" cy="4" r="4" /><circle cx="4" cy="14" r="4" /><circle cx="4" cy="24" r="4" /><path d="M10 1h26v6H10zM10 11h26v6H10zM10 21h26v6H10z" /></svg>
          View All
        </button>
        <button class="w-[214px] flex items-center justify-center gap-[18px]">
          <svg class="w-8 h-[30px]" viewBox="0 0 32 30" fill="none"><path d="M26 23a12.500 12.500 0 1 1-1-17" stroke="#fff" stroke-width="5" /><path d="M31 1v11H20z" fill="#fff" /></svg>
          Reset
        </button>
      </div>
      <div class="shrink-0 mt-6 grid grid-cols-2 gap-5 h-[88px] text-[32px] text-black">
        <button class="rounded-[10px] bg-[#ffff3b] pb-1">Save</button>
        <button class="rounded-[10px] bg-[#ffff55] pb-1">Submit</button>
      </div>
      <div class="shrink-0 h-[178px] pt-[70px] pr-[5px] flex items-start justify-end">
        <button aria-label="Accessibility">
          <svg class="w-9 h-9" viewBox="0 0 36 36" fill="#fff"><circle cx="18" cy="18" r="16.500" fill="none" stroke="#fff" stroke-width="3" /><circle cx="18" cy="9" r="3" /><path d="M8 12h20v3l-6 1v5l3 9h-3l-4-8-4 8h-3l3-9v-5l-6-1z" /></svg>
        </button>
        <button class="ml-5 mt-[7px]" aria-label="Keyboard">
          <svg class="w-10 h-6" viewBox="0 0 40 24" fill="none" stroke="#fff" stroke-width="2"><rect x="1" y="1" width="38" height="22" rx="2" stroke-width="3" /><path d="M5 7h26M5 12h22M34 5v8h-5" stroke-dasharray="3 1" stroke-width="3" /><path d="M5 17h3M10 17h18M31 17h4" stroke-width="3" /></svg>
        </button>
        <button class="ml-3" aria-label="Network">
          <svg class="w-[42px] h-[30px]" viewBox="0 0 42 30" fill="none" stroke="#fff" stroke-width="5"><path d="M2 10C13 0 29 0 40 10M8 17c8-7 18-7 26 0M15 23c4-3 8-3 12 0" /><path d="M17 26h8l-4 4z" fill="#fff" stroke="none" /></svg>
        </button>
        <button class="ml-[14px]" aria-label="Help">
          <svg class="w-6 h-9" viewBox="0 0 24 36"><path d="M3 12c1-6 5-7 9-7 5 0 9 2 9 7 0 7-9 5-9 13" fill="none" stroke="#fff" stroke-width="7" /><path d="M8 27h8v8H8z" fill="#fff" /></svg>
        </button>
      </div>
    </aside>

    <script>
      const letters = "ABCDEFGHIJKLMNOPQ".split("").concat("");
      const days = {
        4: ["A", "Thu, Fri", 1, 0, 1, 1, 1, 1, 0, 0, 1],
        5: ["B", "Wed, Thu", 1, 0, 1, 1, 1, 0, 0, 1, 1],
        6: ["C", "Sat, Sun", 1, 0, 0, 1, 1, 1, 1, 1, 0],
        7: ["D", "Tues, Wed", 2, 0, 1, 1, 0, 0, 1, 1, 1],
        8: ["H", "Sun, Mon", 2, 0, 0, 0, 1, 1, 1, 1, 1],
        9: ["I", "Wed, Thu", 2, 0, 1, 1, 1, 0, 0, 1, 1],
        10: ["J", "Sat, Sun", 2, 0, 0, 1, 1, 1, 1, 1, 0],
      };
      const headings = ["Schedule", "Days off", "Shift", "Staff", "Sun", "Mon", "Tue", "Wed", "Thu", "Fri", "Sat"];
      const labels = { 12: "Total Employees:", 14: "Total Demand:", 16: "Weekly Wage Per Employee:", 17: "Weekly Payroll Expenses:" };
      const demand = [18, 15, 16, 12, 12, 18, 20];

      const R = {
        grid: "border-r-2 border-r-[#dcdcdc]",
        black: "border-r-2 border-r-[#1c1c1c]",
        gray: "border-r-2 border-r-[#8c8c8c]",
        navy: "border-r-4 border-r-[#00007f]",
      };
      const B = {
        grid: "border-b-2 border-b-[#dcdcdc]",
        black: "border-b-2 border-b-[#333333]",
        gray: "border-b-2 border-b-[#8c8c8c]",
        gold: "border-b-4 border-b-[#f1cf7c]",
        navy: "border-b-4 border-b-[#00007f]",
      };

      document.getElementById("letters").innerHTML =
        '<td class="border-r-2 border-r-[#a6a6a6] border-b-2 border-b-[#d0d0d0]"><svg class="ml-[18px] w-6 h-6" viewBox="0 0 24 24"><path d="M24 0v24H0z" fill="#dce3e5" /></svg></td>' +
        letters
          .map((l) =>
            l === "K"
              ? '<th class="bg-[#dfdfdf] border-r-2 border-r-[#cfcfcf] border-b-4 border-b-[#487349] font-normal text-[28px] font-[\'Liberation_Serif\',serif] text-[#487349]">K</th>'
              : `<th class="border-r-2 border-r-[#cfcfcf] border-b-2 border-b-[#a6a6a6] pb-[2px] font-normal text-[28px] font-['Liberation_Serif',serif] text-[#444]">${l}</th>`
          )
          .join("");

      function dayIndex(col) {
        // column D is a spacer
        return col < 3 ? col : col - 1;
      }

      function cell(row, col) {
        let text = "", right = "grid", bottom = "grid", cls = "text-center text-[#222]", span = 1;
        const inDays = row >= 4 && row <= 10;

        if (row === 1 && col === 0) {
          text = "Employee Schedule";
          cls = "text-center font-bold text-[49px] leading-[52px] text-[#2c210c]";
          span = 12;
        } else if (labels[row] && col === 0) {
          text = labels[row];
          cls = "pr-[10px] text-right italic font-bold text-[30px] whitespace-nowrap text-[#111]";
          span = 3;
        } else if (row === 3 && col < 12) {
          text = col === 3 ? "" : headings[dayIndex(col)];
          bottom = col === 4 ? "black" : "gold";
          cls = "text-center font-bold text-[31px] text-[#2c210c]";
          if (col === 1) cls = "pr-10 text-center font-bold text-[31px] text-[#2c210c]";
          if (col === 4) cls = "pb-[2px] text-center font-bold text-[31px] text-[#2c210c]";
        } else if (inDays && col < 12) {
          text = col === 3 ? "" : days[row][dayIndex(col)];
          right = col === 11 ? "navy" : "black";
          bottom = col === 0 ? "gold" : row === 10 ? "navy" : "black";
          if (col === 0) cls = "text-center font-bold text-[31px] text-[#2c210c]";
          if (col === 1) cls = "pl-1 text-left italic text-[#222]";
          if (col === 4) cls = "text-center text-[#222] bg-[#c9bcc7]";
        } else if (row === 12 && col === 4) {
          text = "0";
          right = "black";
        } else if (row === 12 && col > 4 && col < 12) {
          text = "0";
          bottom = "black";
          right = col === 11 ? "grid" : "black";
          cls = "text-center text-[#444] bg-[#e3c5c0]";
        } else if (row === 14 && col > 4 && col < 12) {
          text = demand[col - 5];
          bottom = "black";
          right = col === 11 ? "black" : "none";
          cls = "text-center text-[#444] bg-[#e3c5c0]";
        } else if (row === 14 && col === 4) {
          right = "black";
        } else if ((row === 11 || row === 13) && col > 4 && col < 12) {
          bottom = "black";
        } else if (row === 16 && col === 4) {
          text = "$297.50";
          bottom = "gray";
          cls = "pr-4 text-right text-[#222]";
        } else if (row === 17 && col === 3) {
          right = "gray";
        } else if (row === 17 && col === 4) {
          text = "$0.00";
          right = "gray";
          bottom = "gray";
          cls = "pr-[18px] text-right font-bold text-[#e08a24] bg-[#f2f2f2]";
        } else if (row === 21 && col === 10) {
          text =
            '<div class="absolute -inset-1 border-4 border-[#487349]"></div>' +
            '<div class="absolute -right-2 -bottom-2 w-[14px] h-[14px] bg-[#487349] border-2 border-white"></div>';
          cls = "relative";
        }
        return `<td colspan="${span}" class="align-bottom ${R[right] || ""} ${B[bottom]} ${cls}">${text}</td>`;
      }

      let html = "";
      for (let row = 1; row <= 29; row++) {
        const height = row < 3 ? "h-[60px]" : row === 3 ? "h-12" : row < 11 ? "h-10" : "h-[38px]";
        const head =
          row === 21
            ? "bg-[#dfdfdf] border-r-4 border-r-[#487349] text-[#487349]"
            : "border-r-2 border-r-[#a6a6a6] text-[#444]";
        html += `<tr class="${height}"><th class="align-bottom pb-2 border-b-2 border-b-[#dcdcdc] font-normal text-[28px] leading-7 font-['Liberation_Serif',serif] ${head}">${row}</th>`;
        let col = 0;
        while (col < letters.length) {
          html += cell(row, col);
          col += row === 1 && col === 0 ? 12 : labels[row] && col === 0 ? 3 : 1;
        }
        html += "</tr>";
      }
      document.getElementById("rows").innerHTML = html;
    </script>
  </body>
</html>
